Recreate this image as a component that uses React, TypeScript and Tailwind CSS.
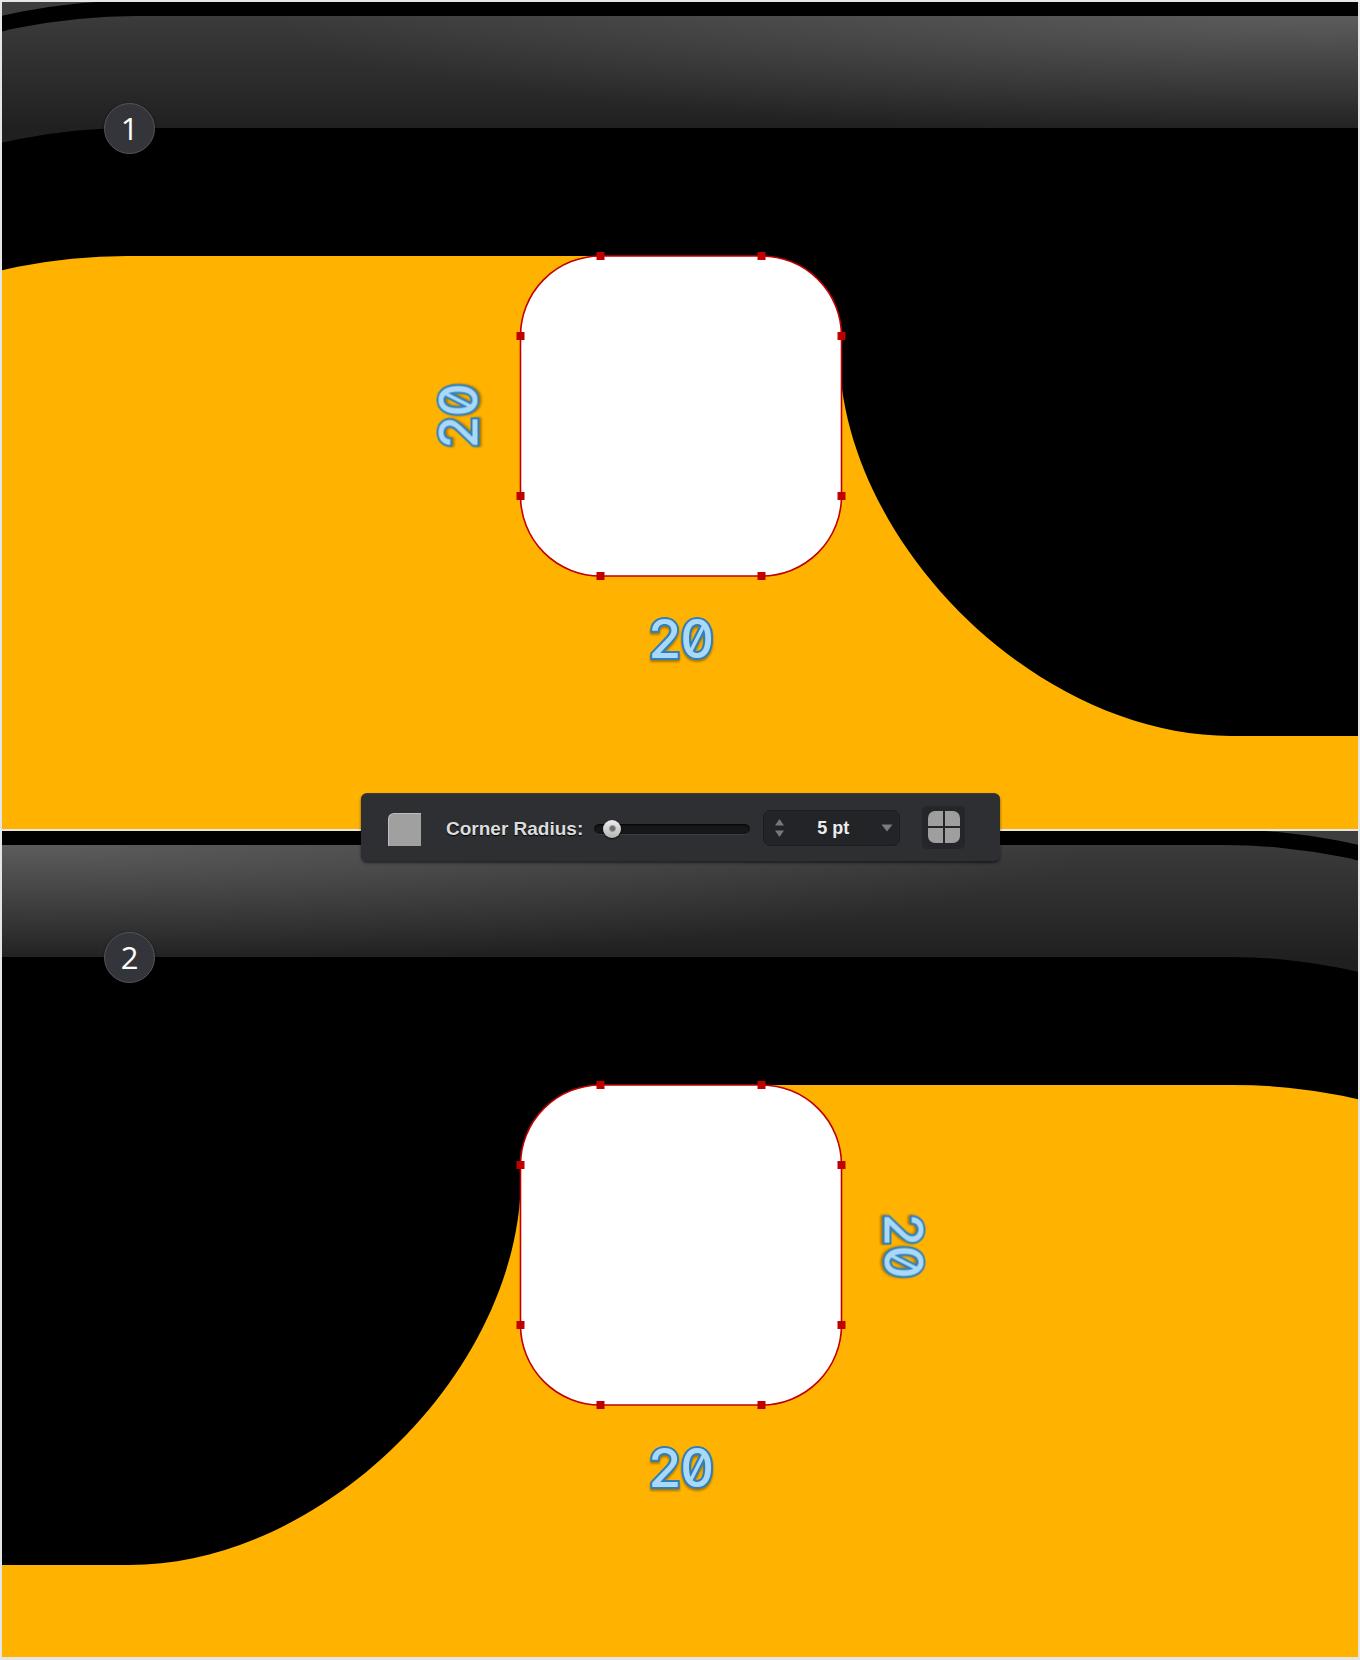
const YELLOW = "#ffb300";

function Canvas({ mirrored, height }: { mirrored?: boolean; height: number }) {
  const id = mirrored ? "b" : "a";
  return (
    <svg
      width="1356"
      height={height}
      viewBox={`0 0 1356 ${height}`}
      className="absolute inset-0 block"
    >
      <defs>
        <linearGradient id={`band-${id}`} x1="0" y1="14" x2="0" y2="126" gradientUnits="userSpaceOnUse">
          <stop offset="0" stopColor="#3b3b3b" />
          <stop offset="1" stopColor="#202020" />
        </linearGradient>
        <radialGradient
          id={`glow-${id}`}
          cx="0"
          cy="0"
          r="1"
          gradientUnits="userSpaceOnUse"
          gradientTransform="translate(1320 14) scale(1050 120)"
        >
          <stop offset="0" stopColor="#ffffff" stopOpacity="0.17" />
          <stop offset="1" stopColor="#ffffff" stopOpacity="0" />
        </radialGradient>
      </defs>
      <g transform={mirrored ? "translate(1356 0) scale(-1 1)" : undefined}>
        <rect width="1356" height={height} fill="#3e3e3e" />
        <rect x={128 - 560} y={-1} width="3000" height="3000" rx="560" fill="#000" />
        <rect x={135 - 600} y={14} width="3000" height="3000" rx="600" fill={`url(#band-${id})`} />
        <rect x={135 - 600} y={14} width="3000" height="3000" rx="600" fill={`url(#glow-${id})`} />
        <rect x={128 - 560} y={126} width="3000" height="3000" rx="560" fill="#000" />
        <rect x={125 - 560} y={254} width="3000" height="3000" rx="560" fill={YELLOW} />
        <path d="M680 200 L1400 200 L1400 734 L1229 734 C1034 734 837 539 837 345 L680 345 Z" fill="#000" />
      </g>
      <rect x="518.5" y="254" width="321" height="320" rx="80" fill="#fff" stroke="#c00000" strokeWidth="1.6" />
      {[
        [598.5, 254],
        [759.5, 254],
        [598.5, 574],
        [759.5, 574],
        [518.5, 334],
        [518.5, 494],
        [839.5, 334],
        [839.5, 494],
      ].map(([x, y], i) => (
        <rect key={i} x={x - 4} y={y - 4} width="8" height="8" fill="#c00000" />
      ))}
    </svg>
  );
}

function Label({ className }: { className: string }) {
  return (
    <div
      className={`absolute -translate-x-1/2 -translate-y-1/2 font-['Inter',sans-serif] text-[53px] font-medium leading-none tracking-[-2px] text-[#a9d9f7] [font-feature-settings:'zero'_1,'tnum'_1] [-webkit-text-stroke:4px_#2f7fbf] [paint-order:stroke_fill] drop-shadow-[0_2px_1px_rgba(0,0,0,0.35)] ${className}`}
    >
      20
    </div>
  );
}

function Badge({ n }: { n: number }) {
  return (
    <div className="absolute left-[102px] top-[101px] flex size-[51px] items-center justify-center rounded-full border border-[#55565a] bg-[#34353a] font-['Open_Sans',sans-serif] text-[31px] leading-none text-white shadow-[0_1px_3px_rgba(0,0,0,0.7)]">
      {n}
    </div>
  );
}

function Panel({ step, mirrored, height }: { step: number; mirrored?: boolean; height: number }) {
  return (
    <div className="relative w-[1356px] overflow-hidden" style={{ height }}>
      <Canvas mirrored={mirrored} height={height} />
      <Badge n={step} />
      {mirrored ? (
        <Label className="left-[901px] top-[414px] rotate-90" />
      ) : (
        <Label className="left-[457px] top-[415px] -rotate-90" />
      )}
      <Label className="left-[678px] top-[637px]" />
    </div>
  );
}

function Toolbar() {
  return (
    <div className="absolute left-[361px] top-[793px] flex h-[68px] w-[639px] items-center rounded-[6px] border-t border-[#3c3d41] bg-[#2e2f33] pl-[27px] pt-[3px] font-['Liberation_Sans',sans-serif] shadow-[0_2px_3px_rgba(0,0,0,0.55)]">
      <div className="size-[33px] rounded-tl-[6px] border-l border-t border-[#bdbdbd] bg-[#a0a0a0]" />
      <span className="ml-[25px] text-[19px] font-bold text-[#dcdcdc] [text-shadow:0_1px_1px_#000]">
        Corner Radius:
      </span>
      <div className="relative ml-[11px] h-[11px] w-[156px] rounded-full border-b border-[#3d3e42] bg-[#161719] shadow-[inset_0_1px_2px_rgba(0,0,0,0.9)]">
        <div className="absolute left-[9px] top-1/2 flex size-[18px] -translate-y-1/2 items-center justify-center rounded-full bg-gradient-to-b from-[#ededed] to-[#b4b4b4] shadow-[0_1px_2px_rgba(0,0,0,0.8)]">
          <div className="size-[7px] rounded-full border border-[#9a9a9a] bg-[#6b6b6b]" />
        </div>
      </div>
      <div className="ml-[13px] flex h-[36px] w-[137px] -translate-y-[1px] items-center rounded-[7px] border border-[#1c1d20] bg-[#232427] pl-[10px] pr-[6px]">
        <svg width="11" height="20" viewBox="0 0 11 20">
          <path d="M5.5 1 L10 7.5 L1 7.5 Z" fill="#77787c" />
          <path d="M5.5 19 L10 12.5 L1 12.5 Z" fill="#77787c" />
        </svg>
        <span className="flex-1 text-center text-[18px] font-bold text-[#ececec]">5 pt</span>
        <svg width="12" height="8" viewBox="0 0 12 8">
          <path d="M0.5 0.5 L11.5 0.5 L6 7.5 Z" fill="#7a7b7f" />
        </svg>
      </div>
      <div className="ml-[22px] flex size-[43px] -translate-y-[2px] items-center justify-center rounded-[5px] bg-[#25262a]">
        <svg width="32" height="32" viewBox="0 0 32 32">
          <rect width="32" height="32" rx="7" fill="#9e9e9e" />
          <rect x="15" y="0" width="2" height="32" fill="#25262a" />
          <rect x="0" y="15" width="32" height="2" fill="#25262a" />
        </svg>
      </div>
    </div>
  );
}

export default function App() {
  return (
    <div className="relative flex h-[1660px] w-[1360px] flex-col gap-[2px] bg-[#e6e6e6] p-[2px]">
      <Panel step={1} height={827} />
      <Panel step={2} mirrored height={826} />
      <Toolbar />
    </div>
  );
}
